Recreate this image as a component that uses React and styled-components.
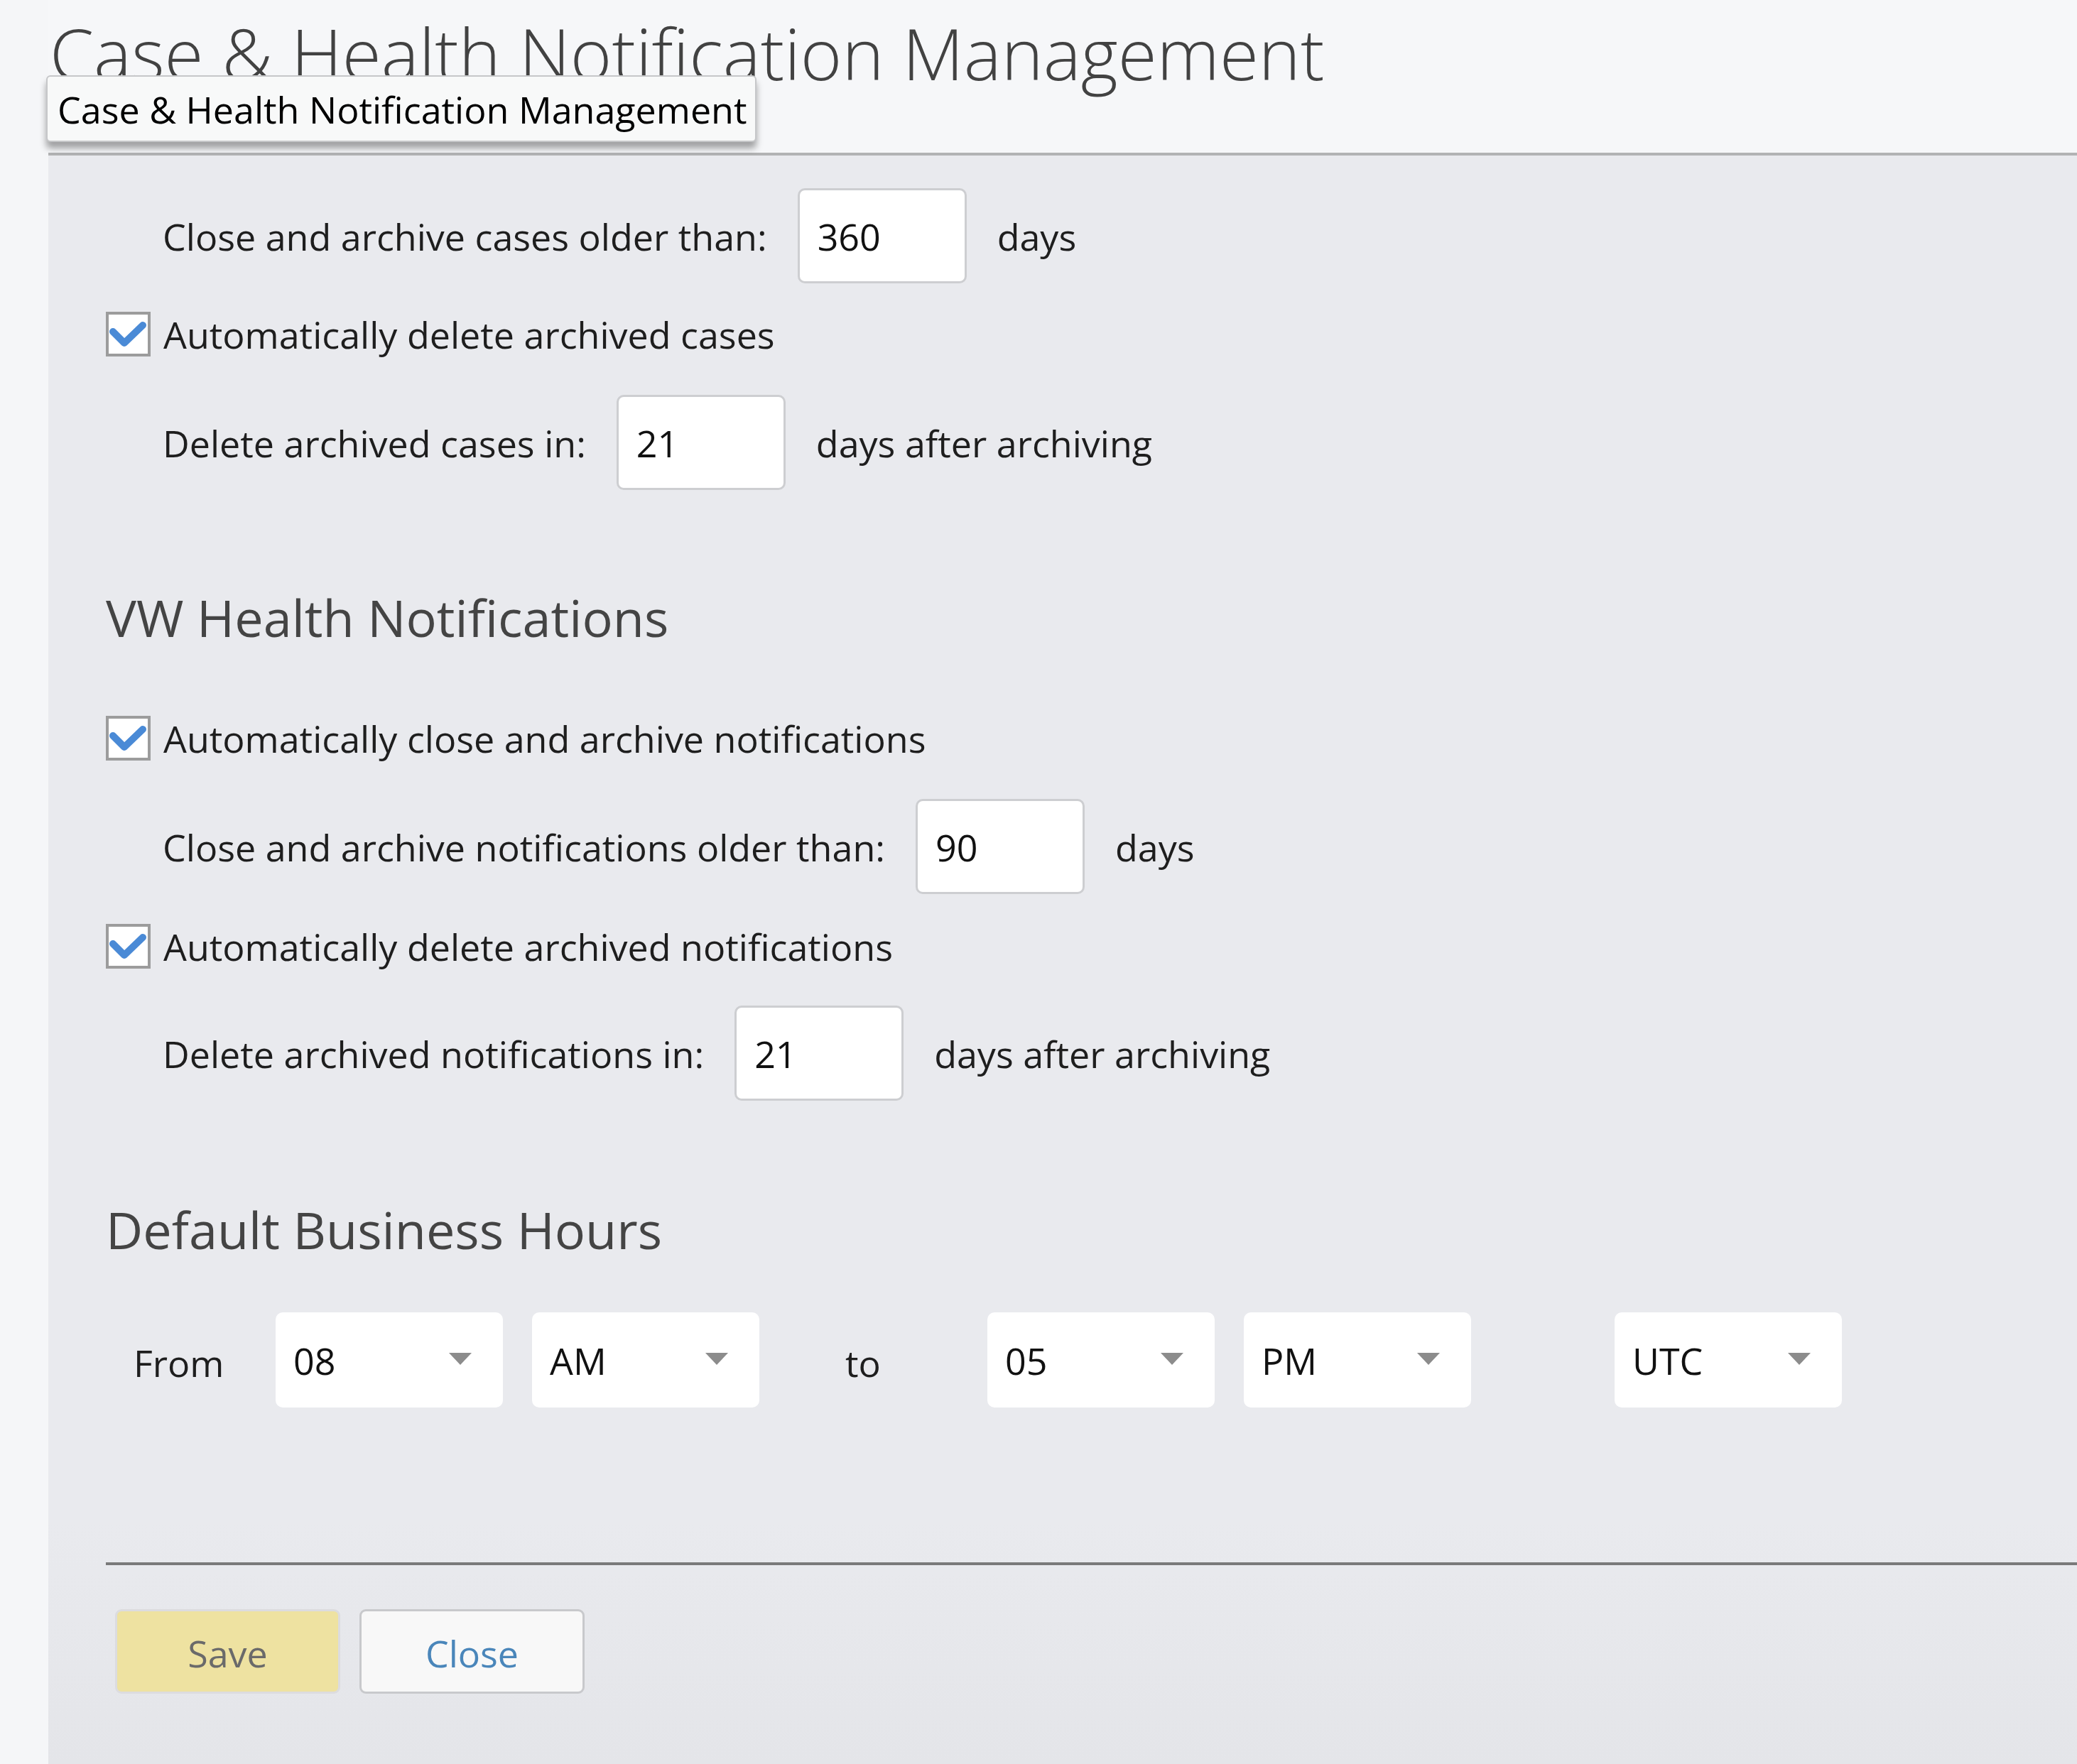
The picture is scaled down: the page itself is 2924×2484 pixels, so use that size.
import React from 'react'
import styled, { createGlobalStyle } from 'styled-components'

const GlobalStyle = createGlobalStyle`
    html, body {
        margin: 0;
        padding: 0;
        background: #f5f6f8;
        font-family: "Open Sans", "Liberation Sans", sans-serif;
    }
`

const Page = styled.div`
    position: relative;
    min-height: 2484px;
    display: flex;
    flex-direction: column;
    padding-left: 68px;
    box-sizing: border-box;
`

const Header = styled.div`
    height: 215px;
    background: #f6f7f9;
    box-sizing: border-box;
    padding-top: 6px;
`

const Title = styled.h1`
    margin: 0 0 0 2px;
    font-size: 100px;
    font-weight: 300;
    line-height: normal;
    color: #424242;
    white-space: nowrap;
`

// the hover tooltip lying over the page title
const Tooltip = styled.div`
    position: absolute;
    left: 65px;
    top: 106px;
    width: 1000px;
    height: 94px;
    box-sizing: border-box;
    padding-left: 14px;
    display: flex;
    align-items: center;
    background: #f8f9f9;
    border: 2px solid #c6c7c9;
    border-radius: 6px;
    box-shadow: 0 9px 10px rgba(0, 0, 0, 0.35);
    font-size: 52px;
    color: #000;
    white-space: nowrap;
`

const Panel = styled.div`
    flex: 1;
    background: linear-gradient(#e9eaee 85%, #e4e5e9);
    border-top: 4px solid #b2b3b4;
    padding: 46px 0 0 81px;
    display: flex;
    flex-direction: column;
`

const Row = styled.div`
    display: flex;
    align-items: center;
    height: ${p => p.$h || 134}px;
    margin-top: ${p => p.$mt || 0}px;
    padding-left: ${p => p.$indent || 0}px;
    font-size: 52px;
    color: #1e1e1e;
    white-space: nowrap;
`

const Label = styled.span`
    margin-right: 43px;
`

const NumberBox = styled.div`
    width: 238px;
    height: 134px;
    box-sizing: border-box;
    background: #fff;
    border: 3px solid #cdced1;
    border-radius: 10px;
    padding-left: 25px;
    display: flex;
    align-items: center;
    margin-right: 43px;
    color: #111;
`

const CheckBox = styled.span`
    width: 63px;
    height: 63px;
    box-sizing: border-box;
    border: 4px solid #9c9c9c;
    background: #fff;
    margin-right: 18px;
    display: inline-flex;
`

const SectionTitle = styled.h2`
    margin: ${p => p.$mt}px 0 0 0;
    height: 96px;
    line-height: 96px;
    font-size: 72px;
    font-weight: 400;
    color: #444;
    white-space: nowrap;
`

const HoursLabel = styled.span`
    width: ${p => p.$w}px;
    padding-left: ${p => p.$pl}px;
    padding-top: 6px;
    box-sizing: border-box;
`

const Select = styled.div`
    width: 320px;
    height: 134px;
    box-sizing: border-box;
    background: #fff;
    border-radius: 10px;
    padding: 0 44px 0 25px;
    display: flex;
    align-items: center;
    justify-content: space-between;
    margin-right: ${p => p.$mr || 0}px;
    color: #111;
`

const Arrow = styled.span`
    width: 0;
    height: 0;
    border-left: 16px solid transparent;
    border-right: 16px solid transparent;
    border-top: 17px solid #8c8c8c;
    margin-top: -4px;
`

const Divider = styled.hr`
    margin: 218px 0 0 0;
    border: none;
    height: 4px;
    background: #7a7a7a;
`

const Buttons = styled.div`
    display: flex;
    gap: 27px;
    margin: 62px 0 0 13px;
`

const Button = styled.button`
    width: 317px;
    height: 119px;
    box-sizing: border-box;
    border-radius: 9px;
    font-family: "Open Sans", "Liberation Sans", sans-serif;
    font-size: 52px;
    border: 3px solid ${p => p.$primary ? '#dcdcdf' : '#c8c9cc'};
    background: ${p => p.$primary ? '#eee2a1' : '#f8f8f8'};
    color: ${p => p.$primary ? '#6a6a6a' : '#4a86ba'};
    padding: 4px 0 0 0;
`

function Check() {
    return (
        <CheckBox>
            <svg width="55" height="55" viewBox="0 0 55 55">
                <path d="M6 24 L22 40 L48 15" fill="none" stroke="#4a8ad6" strokeWidth="10" strokeLinecap="round" strokeLinejoin="round" />
            </svg>
        </CheckBox>
    )
}

function InputRow({ label, value, suffix, mt }) {
    return (
        <Row $mt={mt} $indent={80}>
            <Label>{label}</Label>
            <NumberBox>{value}</NumberBox>
            <span>{suffix}</span>
        </Row>
    )
}

function CheckRow({ label, mt }) {
    return (
        <Row $h={68} $mt={mt}>
            <Check />
            <span>{label}</span>
        </Row>
    )
}

function Dropdown({ value, mr }) {
    return (
        <Select $mr={mr}>
            <span>{value}</span>
            <Arrow />
        </Select>
    )
}

export default function App() {
    return (
        <Page>
            <GlobalStyle />
            <Header>
                <Title>Case &amp; Health Notification Management</Title>
            </Header>
            <Tooltip>Case &amp; Health Notification Management</Tooltip>
            <Panel>
                <InputRow label="Close and archive cases older than:" value="360" suffix="days" />
                <CheckRow label="Automatically delete archived cases" mt={37} />
                <InputRow label="Delete archived cases in:" value="21" suffix="days after archiving" mt={52} />

                <SectionTitle $mt={131}>VW Health Notifications</SectionTitle>
                <CheckRow label="Automatically close and archive notifications" mt={88} />
                <InputRow label="Close and archive notifications older than:" value="90" suffix="days" mt={52} />
                <CheckRow label="Automatically delete archived notifications" mt={39} />
                <InputRow label="Delete archived notifications in:" value="21" suffix="days after archiving" mt={50} />

                <SectionTitle $mt={133}>Default Business Hours</SectionTitle>
                <Row $mt={69}>
                    <HoursLabel $w={239} $pl={39}>From</HoursLabel>
                    <Dropdown value="08" mr={41} />
                    <Dropdown value="AM" />
                    <HoursLabel $w={321} $pl={121}>to</HoursLabel>
                    <Dropdown value="05" mr={41} />
                    <Dropdown value="PM" mr={202} />
                    <Dropdown value="UTC" />
                </Row>

                <Divider />
                <Buttons>
                    <Button $primary>Save</Button>
                    <Button>Close</Button>
                </Buttons>
            </Panel>
        </Page>
    )
}
